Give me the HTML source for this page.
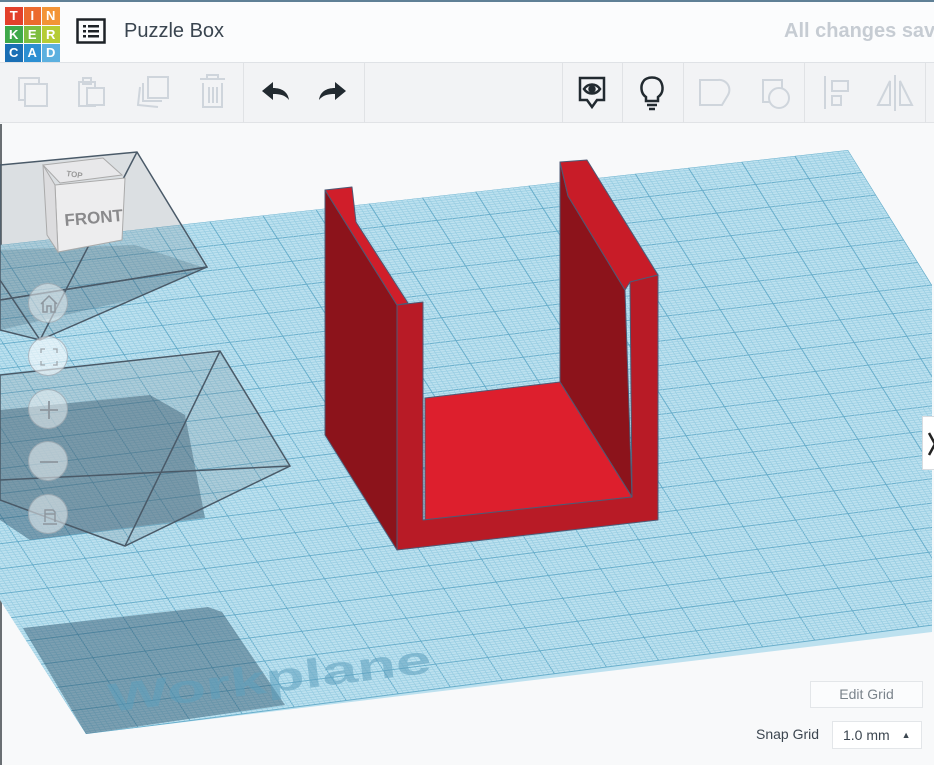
<!DOCTYPE html>
<html><head><meta charset="utf-8"><style>
*{margin:0;padding:0;box-sizing:border-box}
body{width:934px;height:765px;overflow:hidden;background:#f8f9fa;font-family:"Liberation Sans",sans-serif;position:relative}
#hdr{position:absolute;left:0;top:0;width:934px;height:63px;background:#fbfcfd;border-top:2px solid #5f8096;border-bottom:1px solid #dfe2e6;box-shadow:0 1px 3px rgba(0,0,0,.08)}
#tb{position:absolute;left:0;top:63px;width:934px;height:60px;background:#f2f3f5;border-bottom:1px solid #e1e3e6}
.div{position:absolute;top:0;width:1px;height:60px;background:#e0e2e5}
.logo{position:absolute;left:5px;top:5px;width:55px;height:55px}
.logo div{position:absolute;width:17.5px;height:17.5px;color:#fff;font:bold 13px "Liberation Sans",sans-serif;text-align:center;line-height:18px}
#canvas{position:absolute;left:0;top:124px;width:934px;height:641px;border-left:2px solid #6a6f73}
.nb{position:absolute;left:26px;width:40px;height:40px;border-radius:50%;background:rgba(235,240,243,.55);border:1px solid rgba(140,150,160,.6)}
</style></head><body>
<div id="hdr">
 <div class="logo">
  <div style="left:0;top:0;background:#e2402b">T</div><div style="left:18.5px;top:0;background:#ec6a2e">I</div><div style="left:37px;top:0;background:#f39436">N</div>
  <div style="left:0;top:18.5px;background:#3ea84a">K</div><div style="left:18.5px;top:18.5px;background:#7dbd3f">E</div><div style="left:37px;top:18.5px;background:#b6cc34">R</div>
  <div style="left:0;top:37px;background:#1a6fb5">C</div><div style="left:18.5px;top:37px;background:#2c8fd2">A</div><div style="left:37px;top:37px;background:#5cb0df">D</div>
 </div>
 <svg style="position:absolute;left:76px;top:16px" width="30" height="28" viewBox="0 0 30 28"><rect x="1.5" y="1.5" width="27" height="23" fill="none" stroke="#1d2227" stroke-width="2.5"/><g fill="#1d2227"><rect x="7" y="7" width="3" height="2.5"/><rect x="12" y="7" width="11" height="2.5"/><rect x="7" y="12" width="3" height="2.5"/><rect x="12" y="12" width="11" height="2.5"/><rect x="7" y="17" width="3" height="2.5"/><rect x="12" y="17" width="11" height="2.5"/></g></svg>
 <div style="position:absolute;left:124px;top:18px;font-size:20px;color:#3a4550">Puzzle Box</div>
 <div style="position:absolute;left:784px;top:18px;font-size:20px;font-weight:bold;color:#c6ccd3;white-space:nowrap">All changes saved</div>
</div>
<div id="tb">
 <div class="div" style="left:243px"></div><div class="div" style="left:364px"></div><div class="div" style="left:562px"></div><div class="div" style="left:622px"></div><div class="div" style="left:683px"></div><div class="div" style="left:804px"></div><div class="div" style="left:925px"></div>
 <svg width="934" height="60" style="position:absolute;left:0;top:0" fill="none" stroke-width="2">
  <g stroke="#cfd5dc">
   <rect x="19" y="15" width="20" height="22"/><rect x="25" y="21" width="22" height="22" fill="#f2f3f5"/>
   <rect x="79" y="19" width="16" height="24"/><rect x="83" y="15" width="8" height="6"/><rect x="87" y="25" width="17" height="17" fill="#f2f3f5"/>
   <path d="M140 24 L138 42 L158 44 M143 20 L143 38 L162 38"/><rect x="148" y="14" width="20" height="21" fill="#f2f3f5"/>
   <path d="M200 16 H225 M207 16 V12 H218 V16 M203 20 V44 H222 V20 M209 24 V40 M213 24 V40 M217 24 V40"/>
   <path d="M700 17 H718 A10 10 0 0 1 728 32 L722 42 H700 Z"/>
   <rect x="763" y="17" width="19" height="22"/><circle cx="779" cy="35" r="10" fill="#f2f3f5"/>
   <path d="M825 13 V46"/><rect x="832" y="18" width="16" height="10"/><rect x="832" y="33" width="9" height="9"/>
   <path d="M895 12 V48 M890 18 L878 42 H890 Z M900 18 L912 42 H900 Z"/>
  </g>
  <g fill="#222a30" stroke="none">
   <path d="M262 28 L273 19 V25 C282 25 288 29 289 37 C285 32 280 31 273 31 V37 Z"/>
   <path d="M346 28 L335 19 V25 C326 25 320 29 319 37 C323 32 328 31 335 31 V37 Z"/>
  </g>
  <g stroke="#222a30" stroke-width="2.5">
   <path d="M580 15 H604 V37 H597 L592 44 L587 37 H580 Z"/>
   <path d="M584 26 C588 20 596 20 600 26 C596 32 588 32 584 26 Z"/><circle cx="592" cy="26" r="2.5" fill="#222a30"/>
   <path d="M646 38 V34 C640 30 641 22 643 19 C646 13 658 13 661 19 C663 23 664 30 658 34 V38 Z"/>
   <path d="M647 42 H657 M649 46 H655"/>
  </g>
 </svg>
</div>
<div id="canvas">
<svg id="sv" width="934" height="641" viewBox="0 124 934 641" style="position:absolute;left:-2px;top:0">
 <defs><clipPath id="wp"><polygon points="0,245 848,150 932,285 932,632 86,734 0,600"/></clipPath></defs>
 <polygon points="0,245 848,150 932,285 932,632 86,734 0,600" fill="#bde1ef"/>
 <g id="grid" clip-path="url(#wp)"></g>
 <g clip-path="url(#wp)" fill="#2c4f66" opacity=".45">
  <polygon points="23,628 208,607 222,612 285,705 86,734"/>
  <polygon points="0,410 150,395 185,415 205,518 30,540 0,520"/>
  <polygon points="0,250 135,245 205,268 130,300 0,330" opacity=".5"/>
 </g>
 <text x="110" y="712" font-family="Liberation Sans,sans-serif" font-weight="bold" font-size="40" fill="#5d9fbd" opacity=".55" transform="rotate(-7 110 712)" textLength="325" lengthAdjust="spacingAndGlyphs">Workplane</text>
 <g fill="rgba(120,130,140,.22)" stroke="#4a5a68" stroke-width="1.5">
  <polygon points="0,165 137,152 207,267 0,300"/>
  <polygon points="0,300 207,267 40,340 0,330" fill="rgba(90,110,125,.2)"/>
  <path d="M137,152 L40,340 M0,280 L40,340" fill="none"/>
  <polygon points="0,375 220,351 290,466 125,546 0,500"/>
  <path d="M220,351 L125,546 M0,480 L290,466" fill="none"/>
 </g>
 <g>
  <polygon points="43,165 103,158 122,175 60,183" fill="#e8e8ea" stroke="#aaa"/>
  <polygon points="55,185 125,178 122,240 58,252" fill="#ededee" stroke="#aaa"/>
  <polygon points="43,165 55,185 58,252 47,235" fill="#dcdcde" stroke="#aaa"/>
  <text x="66" y="176" font-size="8" font-weight="bold" fill="#999" font-family="Liberation Sans,sans-serif" transform="rotate(8 66 176)">TOP</text>
  <text x="65" y="226" font-size="17" font-weight="bold" fill="#8a8a8c" font-family="Liberation Sans,sans-serif" transform="rotate(-5 65 226)">FRONT</text>
 </g>
 <g stroke="#4e5a75" stroke-width="1" stroke-linejoin="round">
  <polygon points="325,190 397,305 397,550 325,435" fill="#8c131b"/>
  <polygon points="325,190 352,187 356,222 408,303 397,305" fill="#d01e2a"/>
  <polygon points="560,162 568,196 625,290 632,497 560,382" fill="#8c131b"/>
  <polygon points="425,398 560,382 632,497 425,520" fill="#dd1f2d"/>
  <polygon points="560,162 587,160 658,275 630,282 625,290 568,196" fill="#c81c28"/>
  <polygon points="397,305 423,302 423,520 632,497 630,282 658,275 658,520 397,550" fill="#b81b26"/>
 </g>
</svg>
<div class="nb" style="top:159px"><svg width="40" height="40" fill="none" stroke="#8d969e" stroke-width="1.5"><path d="M12 20 L20 12 L28 20 M14 18 V28 H18 V22 H22 V28 H26 V18"/></svg></div>
<div class="nb" style="top:212px;background:rgba(250,252,253,.6)"><svg width="40" height="40" fill="none" stroke="#a0a8ae" stroke-width="1.3"><path d="M12 16 V12 H16 M24 12 H28 V16 M28 24 V28 H24 M16 28 H12 V24"/></svg></div>
<div class="nb" style="top:265px"><svg width="40" height="40" stroke="#8d969e" stroke-width="1.8"><path d="M20 11 V29 M11 20 H29"/></svg></div>
<div class="nb" style="top:317px"><svg width="40" height="40" stroke="#8d969e" stroke-width="1.8"><path d="M11 20 H29"/></svg></div>
<div class="nb" style="top:370px"><svg width="40" height="40" fill="none" stroke="#8d969e" stroke-width="1.4"><path d="M14 29 H28 M16 27 V15 H24 L26 17 V27 M16 19 H26"/></svg></div>
<div style="position:absolute;left:920px;top:292px;width:16px;height:54px;background:#fff;border:1px solid #d8dce0;overflow:hidden"><svg width="16" height="54"><path d="M6 16 L12 27 L6 38" fill="none" stroke="#222" stroke-width="2.5"/></svg></div>
<div style="position:absolute;left:808px;top:557px;width:113px;height:27px;background:#fbfcfd;border:1px solid #e3e6e9;color:#7b848c;font-size:14px;text-align:center;line-height:25px">Edit Grid</div>
<div style="position:absolute;left:754px;top:602px;font-size:14px;color:#3c4650">Snap Grid</div>
<div style="position:absolute;left:830px;top:597px;width:90px;height:28px;background:#fff;border:1px solid #e3e6e9;color:#3c4650;font-size:14px;line-height:26px;padding-left:10px">1.0 mm <span style="font-size:9px;margin-left:8px;position:relative;top:-2px">&#9650;</span></div>
</div>
<script>
(function(){
var g=document.getElementById('grid');
var TL=[-216,269],TR=[848,150],BR=[1127,600],BL=[86,734];
function L(a,b,t){return[a[0]+(b[0]-a[0])*t,a[1]+(b[1]-a[1])*t]}
var h='';var N=200;
for(var i=0;i<=N;i++){var t=i/N;var maj=i%10==0;
 var a=L(TL,TR,t),b=L(BL,BR,t);
 var c=L(TL,BL,t),d=L(TR,BR,t);
 var s=maj?'stroke="#68aecb" stroke-width="1"':'stroke="#98cde2" stroke-width="0.7"';
 h+='<line x1="'+a[0]+'" y1="'+a[1]+'" x2="'+b[0]+'" y2="'+b[1]+'" '+s+'/>';
 h+='<line x1="'+c[0]+'" y1="'+c[1]+'" x2="'+d[0]+'" y2="'+d[1]+'" '+s+'/>';}
g.innerHTML=h;
var svg=document.getElementById('sv');svg.innerHTML=svg.innerHTML;
})();
</script>
</body></html>
